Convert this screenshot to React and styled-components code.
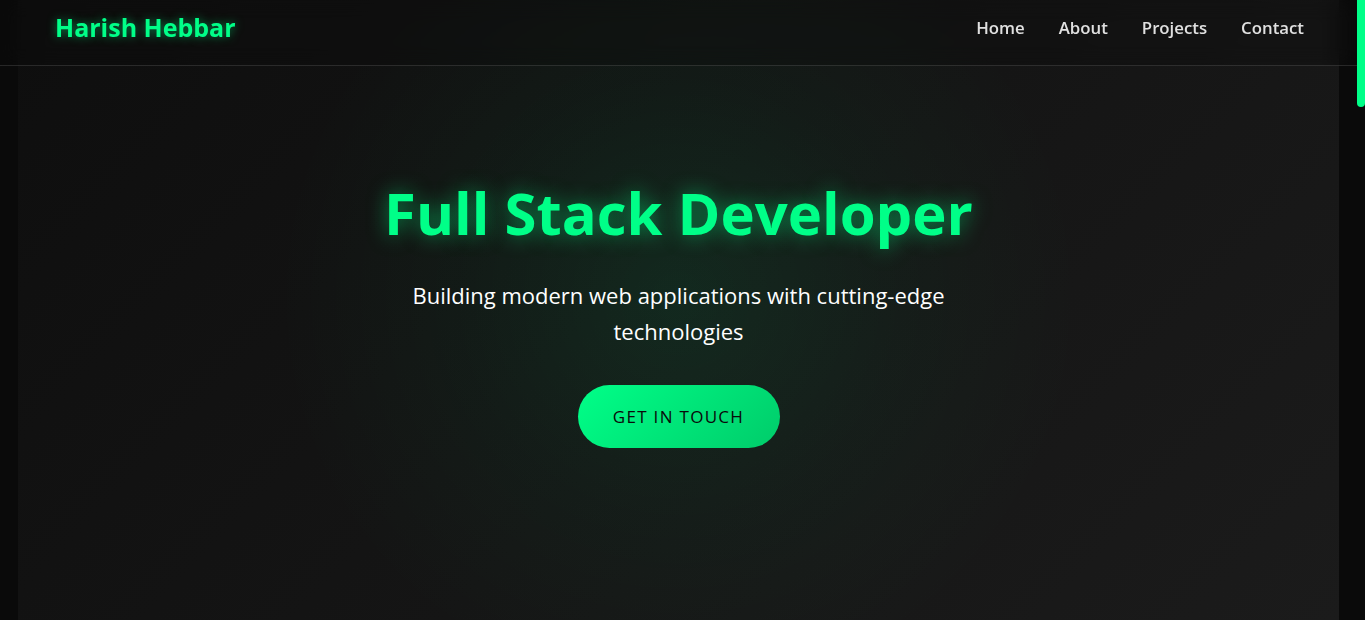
import React from 'react'
import styled, { createGlobalStyle } from 'styled-components'

const GlobalStyle = createGlobalStyle`
* {
  box-sizing: border-box;
}

html, body {
  margin: 0;
  padding: 0;
  background-color: #0a0a0a;
  color: #ffffff;
  font-family: "Open Sans", "Noto Sans", sans-serif;
}
`

const Page = styled.div`
margin-right: 8px;
`

const ScrollThumb = styled.div`
position: fixed;
top: 0;
right: 0;
z-index: 20;
width: 8px;
height: 107px;
background-color: #00ff88;
border-radius: 0 0 4px 4px;
`

const Header = styled.header`
position: fixed;
top: 0;
left: 0;
right: 8px;
z-index: 10;
height: 66px;
padding: 0 53px 11px 55px;

display: flex;
justify-content: space-between;
align-items: center;

background-color: rgba(10, 10, 10, 0.3);
backdrop-filter: blur(10px);
border-bottom: 1px solid rgba(255, 255, 255, 0.12);
`

const Logo = styled.a`
font-size: 25px;
font-weight: 700;
color: #00ff88;
text-decoration: none;
text-shadow: 0 0 10px rgba(0, 255, 136, 0.5);
`

const Nav = styled.nav`
display: flex;
gap: 34px;
`

const NavLink = styled.a`
font-size: 16.8px;
font-weight: 600;
color: #e0e0e0;
text-decoration: none;
`

const Hero = styled.section`
min-height: 100vh;
margin: 0 18px;
padding-top: 6px;

display: flex;
flex-direction: column;
justify-content: center;
align-items: center;
text-align: center;

background:
  radial-gradient(circle at 50% 48%, rgba(0, 255, 136, 0.09) 0%, rgba(0, 255, 136, 0.03) 30%, transparent 55%),
  linear-gradient(135deg, #0e0e0e 0%, #1b1b1b 100%);
`

const Title = styled.h1`
margin: 0 0 30px;
font-size: 58px;
font-weight: 700;
line-height: 1.2;
color: #00ff88;
text-shadow: 0 0 20px rgba(0, 255, 136, 0.5);
`

const Subtitle = styled.p`
max-width: 600px;
margin: 0 0 36px;
font-size: 22px;
line-height: 36px;
color: #ffffff;
`

const Button = styled.a`
display: inline-flex;
align-items: center;
justify-content: center;
width: 202px;
height: 63px;
border-radius: 32px;

background: linear-gradient(135deg, #00ff88 0%, #00cc6a 100%);
color: #0a0a0a;
font-size: 17px;
font-weight: 500;
letter-spacing: 1.3px;
text-transform: uppercase;
text-decoration: none;
`

const Section = styled.section`
min-height: 990px;
margin: 0 18px;
`

const App = () => {
  return (
    <Page>
      <GlobalStyle />
      <ScrollThumb />
      <Header>
        <Logo href="#home">Harish Hebbar</Logo>
        <Nav>
          <NavLink href="#home">Home</NavLink>
          <NavLink href="#about">About</NavLink>
          <NavLink href="#projects">Projects</NavLink>
          <NavLink href="#contact">Contact</NavLink>
        </Nav>
      </Header>
      <Hero id="home">
        <Title>Full Stack Developer</Title>
        <Subtitle>Building modern web applications with cutting-edge technologies</Subtitle>
        <Button href="#contact">Get in Touch</Button>
      </Hero>
      <Section id="about" />
      <Section id="projects" />
      <Section id="contact" />
    </Page>
  )
}

export default App
